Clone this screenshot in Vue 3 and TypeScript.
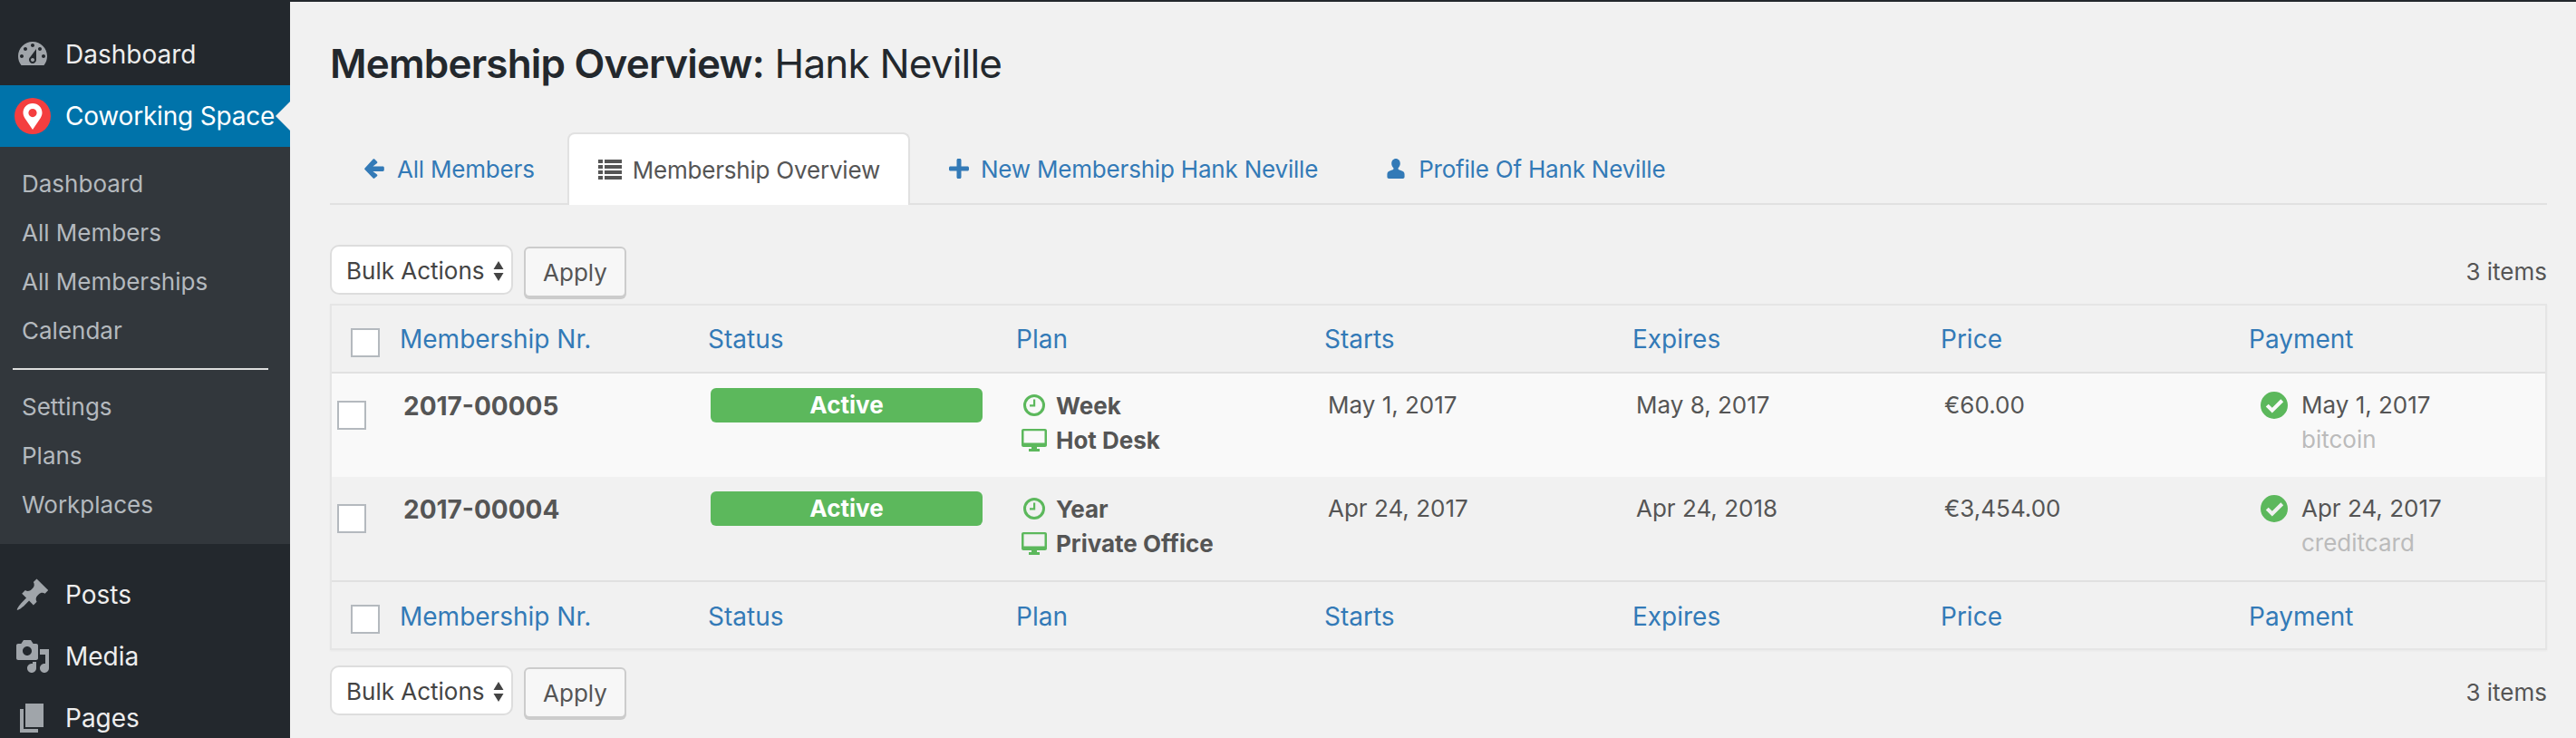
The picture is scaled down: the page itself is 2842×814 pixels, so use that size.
<script setup lang="ts">
interface Row {
  nr: string
  period: string
  plan: string
  starts: string
  expires: string
  price: string
  paid: string
  method: string
}

const columns = ['Membership Nr.', 'Status', 'Plan', 'Starts', 'Expires', 'Price', 'Payment']

const rows: Row[] = [
  { nr: '2017-00005', period: 'Week', plan: 'Hot Desk', starts: 'May 1, 2017', expires: 'May 8, 2017', price: '€60.00', paid: 'May 1, 2017', method: 'bitcoin' },
  { nr: '2017-00004', period: 'Year', plan: 'Private Office', starts: 'Apr 24, 2017', expires: 'Apr 24, 2018', price: '€3,454.00', paid: 'Apr 24, 2017', method: 'creditcard' },
]

const subTop = ['Dashboard', 'All Members', 'All Memberships', 'Calendar']
const subBottom = ['Settings', 'Plans', 'Workplaces']

const menuBottom = [
  { label: 'Posts', d: 'M10.44 3.02l1.82-1.82 6.36 6.35-1.83 1.82c-1.05-.68-2.48-.57-3.41.36l-.75.75c-.92.93-1.04 2.35-.35 3.41l-1.83 1.82-2.41-2.41-2.8 2.79c-.42.42-3.38 2.71-3.8 2.29s1.86-3.39 2.28-3.81l2.79-2.79L4.1 9.36l1.83-1.82c1.05.69 2.48.57 3.4-.36l.75-.75c.93-.92 1.05-2.35.36-3.41z' },
  { label: 'Media', d: 'M13 11V4c0-.55-.45-1-1-1h-1.67L9 1H5L3.67 3H2c-.55 0-1 .45-1 1v7c0 .55.45 1 1 1h10c.55 0 1-.45 1-1zM7 4.5c1.38 0 2.5 1.12 2.5 2.5S8.38 9.5 7 9.5 4.5 8.38 4.5 7 5.62 4.5 7 4.5zM14 6h5v10.5c0 1.38-1.12 2.5-2.5 2.5S14 17.88 14 16.5s1.12-2.5 2.5-2.5c.17 0 .34.02.5.05V9h-3V6zm-4 8.05V13h2v3.5c0 1.38-1.12 2.5-2.5 2.5S7 17.88 7 16.5 8.12 14 9.5 14c.17 0 .34.02.5.05z' },
  { label: 'Pages', d: 'M6 15V2h10v13H6zm-1 1h8v2H3V5h2v11z' },
]

const gauge = 'M3.76 16h12.48c1.1-1.37 1.76-3.11 1.76-5 0-4.42-3.58-8-8-8s-8 3.58-8 8c0 1.89.66 3.63 1.76 5zM10 4c.55 0 1 .45 1 1s-.45 1-1 1-1-.45-1-1 .45-1 1-1zM6 6c.55 0 1 .45 1 1s-.45 1-1 1-1-.45-1-1 .45-1 1-1zm8 0c.55 0 1 .45 1 1s-.45 1-1 1-1-.45-1-1 .45-1 1-1zm-5.37 5.55L12 7v6c0 1.1-.9 2-2 2s-2-.9-2-2c0-.57.24-1.08.63-1.45zM4 10c.55 0 1 .45 1 1s-.45 1-1 1-1-.45-1-1 .45-1 1-1zm12 0c.55 0 1 .45 1 1s-.45 1-1 1-1-.45-1-1 .45-1 1-1zm-5 3c0-.55-.45-1-1-1s-1 .45-1 1 .45 1 1 1 1-.45 1-1z'
</script>

<template>
  <div class="page">
    <aside class="sidebar">
      <a class="menu-item">
        <svg class="dash" viewBox="0 0 20 20"><path :d="gauge" fill-rule="evenodd" /></svg>
        <span>Dashboard</span>
      </a>
      <a class="menu-item current">
        <svg class="dash" viewBox="0 0 40 40">
          <circle cx="20" cy="20" r="20" fill="#f43e3f" />
          <path fill="#fff" fill-rule="evenodd" d="M20 6c-6 0-10.500 4.500-10.500 10.300 0 2.400.8 4.300 2 6.200L20 35l8.500-12.500c1.200-1.900 2-3.800 2-6.200C30.500 10.500 26 6 20 6zm0 6a4.600 4.600 0 1 1 0 9.200 4.600 4.600 0 0 1 0-9.200z" />
        </svg>
        <span>Coworking Space</span>
      </a>
      <nav class="submenu">
        <a v-for="s in subTop" :key="s">{{ s }}</a>
        <hr />
        <a v-for="s in subBottom" :key="s">{{ s }}</a>
      </nav>
      <div class="menu-rest">
        <a v-for="m in menuBottom" :key="m.label" class="menu-item">
          <svg class="dash" viewBox="0 0 20 20"><path :d="m.d" /></svg>
          <span>{{ m.label }}</span>
        </a>
      </div>
    </aside>

    <main class="content">
      <h1><strong>Membership Overview:</strong> Hank Neville</h1>

      <div class="tabs">
        <a class="tab first">
          <svg viewBox="0 0 22 22"><path d="M11.300 0.500l2.700 2.700c.5.500.5 1.200 0 1.700L9.400 8.500h11c.8 0 1.400.6 1.400 1.400v2.600c0 .8-.6 1.400-1.400 1.400h-11l4.600 3.700c.5.500.5 1.200 0 1.700l-2.700 2.200c-.5.500-1.200.5-1.700 0L0.500 12.100c-.5-.5-.5-1.200 0-1.700L9.600.5c.5-.5 1.200-.5 1.700 0z" /></svg>
          All Members
        </a>
        <a class="tab active">
          <svg class="list" viewBox="0 0 26 22"><path d="M0 0h5v4H0zM7 0h19v4H7zM0 6h5v4H0zM7 6h19v4H7zM0 12h5v4H0zM7 12h19v4H7zM0 18h5v4H0zM7 18h19v4H7z" /></svg>
          Membership Overview
        </a>
        <a class="tab plus">
          <svg viewBox="0 0 22 22"><path d="M8.500 1.500C8.500.7 9.200 0 10 0h2c.8 0 1.500.7 1.500 1.500v7h7c.8 0 1.500.7 1.500 1.500v2c0 .8-.7 1.500-1.500 1.500h-7v7c0 .8-.7 1.500-1.500 1.500h-2c-.8 0-1.500-.7-1.500-1.500v-7h-7C.7 13.500 0 12.800 0 12v-2c0-.8.7-1.500 1.500-1.500h7z" /></svg>
          New Membership Hank Neville
        </a>
        <a class="tab">
          <svg viewBox="0 0 22 23"><path d="M11 0c3 0 5 2.500 5 5.600 0 2.100-.9 4-2.300 5.100v1.100c0 .8 1 1.200 3 1.900 3 1 4.300 1.900 4.300 4.300V21c0 1.200-.8 2-2 2H3c-1.200 0-2-.8-2-2v-3c0-2.400 1.300-3.300 4.300-4.300 2-.7 3-1.100 3-1.900v-1.100C6.900 9.600 6 7.700 6 5.600 6 2.500 8 0 11 0z" /></svg>
          Profile Of Hank Neville
        </a>
      </div>

      <div class="toolbar top">
        <div class="select">
          Bulk Actions
          <svg viewBox="0 0 12 22"><path d="M6 0l5.500 9H.5zM6 22L.5 13h11z" /></svg>
        </div>
        <button class="apply">Apply</button>
        <span class="count">3 items</span>
      </div>

      <div class="table">
        <div class="head">
          <div class="cb-cell"><span class="checkbox" /></div>
          <a v-for="c in columns" :key="c">{{ c }}</a>
        </div>

        <div v-for="(r, i) in rows" :key="r.nr" class="row" :class="{ odd: i === 0 }">
          <div class="cb-row"><span class="checkbox" /></div>
          <div class="nr">{{ r.nr }}</div>
          <div class="status"><span class="badge">Active</span></div>
          <div class="plan">
            <div class="plan-line">
              <span class="plan-icon">
                <svg class="clock" viewBox="0 0 24 24"><path fill-rule="evenodd" d="M12 0a12 12 0 1 1 0 24 12 12 0 0 1 0-24zm0 3a9 9 0 1 0 0 18 9 9 0 0 0 0-18zm-1 2.500h2.200V13.500H7v-2.200h4z" /></svg>
              </span>
              {{ r.period }}
            </div>
            <div class="plan-line">
              <span class="plan-icon">
                <svg class="screen" viewBox="0 0 28 25"><path fill-rule="evenodd" d="M2 0h24c1.100 0 2 .9 2 2v16c0 1.100-.9 2-2 2H17v2h3v3H8v-3h3v-2H2c-1.100 0-2-.9-2-2V2C0 .9.9 0 2 0zm.5 2.200v13.300h23V2.200z" /></svg>
              </span>
              {{ r.plan }}
            </div>
          </div>
          <div class="cell">{{ r.starts }}</div>
          <div class="cell">{{ r.expires }}</div>
          <div class="cell">{{ r.price }}</div>
          <div class="payment">
            <svg class="check" viewBox="0 0 30 30"><path fill-rule="evenodd" d="M15 0a15 15 0 1 1 0 30 15 15 0 0 1 0-30zm7.300 8.300L12.800 17.800l-4.100-4.100-2.900 2.900 7 7L25.200 11.200z" /></svg>
            <div>
              <div class="paid">{{ r.paid }}</div>
              <div class="method">{{ r.method }}</div>
            </div>
          </div>
        </div>

        <div class="head foot">
          <div class="cb-cell"><span class="checkbox" /></div>
          <a v-for="c in columns" :key="c">{{ c }}</a>
        </div>
      </div>

      <div class="toolbar bottom">
        <div class="select">
          Bulk Actions
          <svg viewBox="0 0 12 22"><path d="M6 0l5.500 9H.5zM6 22L.5 13h11z" /></svg>
        </div>
        <button class="apply">Apply</button>
        <span class="count">3 items</span>
      </div>
    </main>
  </div>
</template>

<style scoped>
.page {
  display: flex;
  height: 814px;
  overflow: hidden;
  font-family: Inter, "Open Sans", sans-serif;
  font-size: 26px;
  color: #555;
  background: #f1f1f1;
  box-sizing: border-box;
  border-top: 2px solid #23282d;
}

/* sidebar */
.sidebar {
  width: 320px;
  flex-shrink: 0;
  padding-top: 24px;
  background: #23282d;
  color: #eee;
}
.menu-item {
  position: relative;
  display: flex;
  align-items: center;
  height: 68px;
  font-size: 28px;
  color: #eee;
}
.menu-item .dash {
  width: 40px;
  height: 40px;
  margin: 0 16px;
  fill: #a0a5aa;
  flex-shrink: 0;
}
.menu-item span {
  white-space: nowrap;
}
.current {
  background: #0073aa;
  color: #fff;
}
.current span {
  letter-spacing: -0.2px;
}
.current::after {
  content: "";
  position: absolute;
  right: 0;
  top: 18px;
  border: 16px solid transparent;
  border-right-color: #f1f1f1;
  border-left-width: 0;
}
.submenu {
  display: flex;
  flex-direction: column;
  height: 438px;
  padding-top: 14px;
  box-sizing: border-box;
  background: #32373c;
  color: #b4b9be;
}
.submenu a {
  height: 54px;
  line-height: 54px;
  padding-left: 24px;
  font-size: 26px;
}
.submenu hr {
  width: 282px;
  height: 2px;
  margin: 14px 0 14px 14px;
  border: 0;
  background: #ddd;
}
.menu-rest {
  padding-top: 22px;
}

/* main column */
.content {
  flex: 1;
  min-width: 0;
  padding: 0 32px 0 44px;
}
h1 {
  margin: 38px 0 46px;
  height: 60px;
  font-size: 44px;
  line-height: 60px;
  font-weight: 400;
  letter-spacing: -0.8px;
  color: #23282d;
}
h1 strong {
  font-weight: 600;
}

.tabs {
  display: flex;
  height: 80px;
  box-sizing: border-box;
  border-bottom: 2px solid #e1e1e1;
}
.tab {
  display: flex;
  align-items: center;
  gap: 14px;
  height: 80px;
  padding: 0 36px 0 38px;
  box-sizing: border-box;
  color: #337ab7;
  white-space: nowrap;
  fill: #337ab7;
  letter-spacing: -0.2px;
}
.tab svg {
  width: 22px;
  height: 22px;
}
.tab.active {
  padding: 0 31px 0 32px;
  gap: 12px;
  background: #fff;
  color: #555;
  fill: #555;
  border: 2px solid #e1e1e1;
  border-bottom: 0;
  border-radius: 8px 8px 0 0;
}
.tab .list {
  width: 26px;
}
.tab.plus {
  gap: 13px;
  padding: 0 37px 0 43px;
}

.toolbar {
  display: flex;
  align-items: flex-start;
  height: 58px;
}
.toolbar.top {
  margin: 44px 0 7px;
}
.toolbar.bottom {
  margin-top: 17px;
}
.select {
  display: flex;
  align-items: center;
  justify-content: space-between;
  width: 202px;
  height: 55px;
  padding: 2px 8px 0 16px;
  box-sizing: border-box;
  background: #fff;
  border: 2px solid #ddd;
  border-radius: 10px;
  color: #444;
}
.select svg {
  width: 12px;
  height: 22px;
  fill: #444;
}
.apply {
  width: 113px;
  height: 56px;
  margin: 2px 0 0 12px;
  background: #f7f7f7;
  border: 2px solid #ccc;
  border-radius: 6px;
  box-shadow: 0 2px 0 #ccc;
  font: inherit;
  color: #555;
}
.count {
  margin-left: auto;
  align-self: center;
}

/* table */
.table {
  border: 2px solid #e5e5e5;
  box-shadow: 0 1px 2px rgba(0, 0, 0, 0.04);
}
.head,
.row {
  display: grid;
  grid-template-columns: 75px repeat(6, 340px) 1fr;
}
.head {
  align-items: center;
  height: 75px;
  box-sizing: border-box;
  border-bottom: 2px solid #e1e1e1;
  color: #337ab7;
  font-size: 28px;
}
.head.foot {
  padding-top: 3px;
  border-top: 2px solid #e1e1e1;
  border-bottom: 0;
}
.cb-cell {
  display: flex;
  padding: 9px 0 0 21px;
}
.foot .cb-cell {
  padding-top: 6px;
}
.checkbox {
  display: block;
  width: 32px;
  height: 32px;
  box-sizing: border-box;
  background: #fff;
  border: 2px solid #b4b9be;
}
.row {
  height: 114px;
  padding-top: 16px;
  box-sizing: border-box;
}
.row.odd {
  background: #f9f9f9;
}
.cb-row {
  padding: 14px 0 0 6px;
}
.nr {
  padding-left: 4px;
  font-size: 28px;
  font-weight: 700;
  line-height: 40px;
}
.status {
  padding-left: 3px;
}
.badge {
  display: block;
  width: 300px;
  height: 38px;
  line-height: 38px;
  text-align: center;
  background: #5cb85c;
  color: #fff;
  font-weight: 700;
  border-radius: 6px;
}
.plan {
  font-weight: 700;
}
.plan-line {
  display: flex;
  align-items: center;
  height: 38px;
}
.plan-icon {
  display: flex;
  justify-content: center;
  width: 28px;
  margin: 0 10px 0 6px;
}
.clock {
  width: 24px;
  height: 24px;
  fill: #5cb85c;
}
.screen {
  width: 28px;
  height: 25px;
  fill: #5cb85c;
}
.cell {
  padding-left: 4px;
  line-height: 38px;
}
.payment {
  display: flex;
  gap: 15px;
  padding-left: 13px;
}
.check {
  width: 30px;
  height: 30px;
  margin-top: 4px;
  fill: #5cb85c;
  flex-shrink: 0;
}
.paid {
  line-height: 38px;
}
.method {
  line-height: 38px;
  color: #bbb;
}
</style>

<style>
html,
body {
  margin: 0;
  background: #f1f1f1;
}
</style>
